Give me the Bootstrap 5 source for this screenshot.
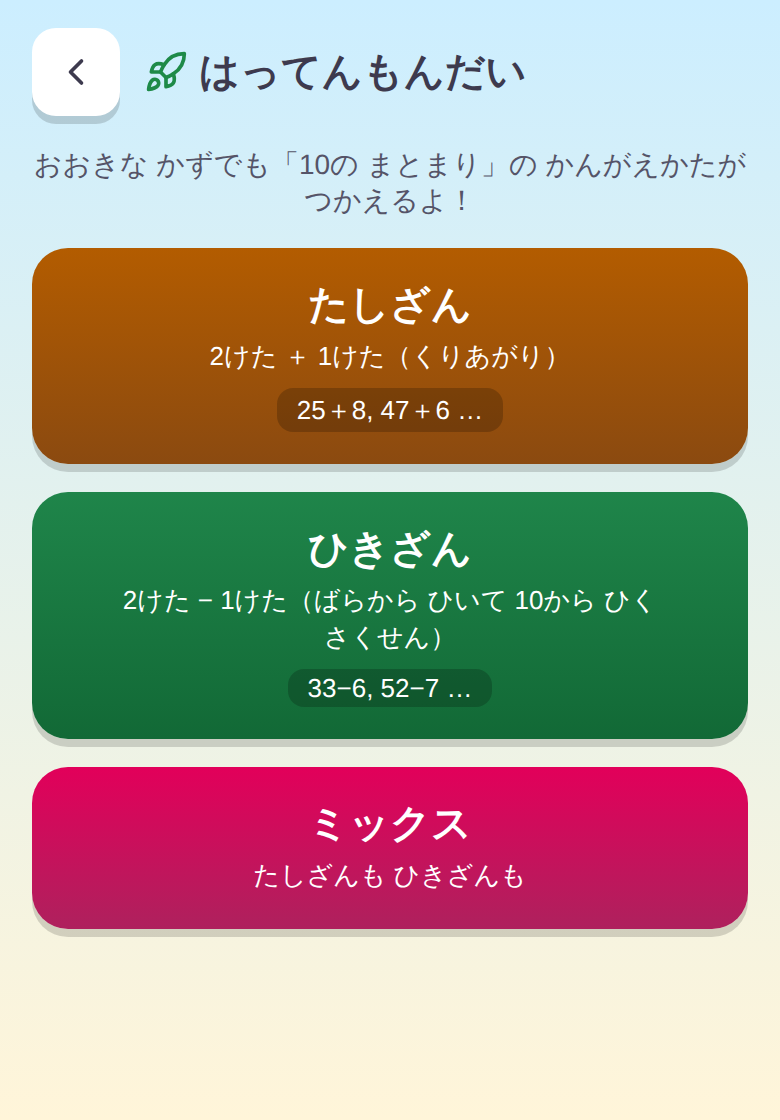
<!DOCTYPE html>
<html lang="ja">
<head>
<meta charset="utf-8">
<meta name="viewport" content="width=device-width, initial-scale=1">
<title>はってんもんだい</title>
<link href="https://cdn.jsdelivr.net/npm/bootstrap@5.3.0/dist/css/bootstrap.min.css" rel="stylesheet">
<script src="https://cdn.jsdelivr.net/npm/bootstrap@5.3.0/dist/js/bootstrap.bundle.min.js" defer></script>
<style>
body, .btn { text-rendering: geometricPrecision; }
body { font-family: "Liberation Sans", sans-serif; color: #3d3a4e; background: linear-gradient(#cceeff, #fff5d9) no-repeat; }
.screen { padding: 28px 32px; }
.screen-head { margin-bottom: 31px; }
.back-btn { width: 88px; height: 88px; border-radius: 24px; --bs-btn-bg: #fff; --bs-btn-color: #3d3a4e; --bs-btn-hover-bg: #f6f6fa; box-shadow: 0 8px 0 rgba(0,0,0,.15); }
.page-title { font-size: 40px; line-height: 58px; gap: 11px; }
.rocket { color: #1e8a48; }
.intro { font-size: 28px; line-height: 36px; margin-bottom: 29px; color: #555468; }
.modes { gap: 28px; }
.mode-btn { --bs-btn-color: #fff; --bs-btn-hover-color: #fff; --bs-btn-active-color: #fff; border-radius: 36px; padding: 32px; box-shadow: 0 8px 0 rgba(0,0,0,.15); word-break: keep-all; }
.mode-name { font-size: 40px; line-height: 50px; margin-bottom: 8px; }
.mode-desc { font-size: 26px; line-height: 37px; margin-bottom: 3px; }
.mode-sample { font-size: 26px; line-height: 30px; padding: 4px 20px; margin-top: 10px; border-radius: 16px; background: rgba(0,0,0,.2); }
.mode-add .mode-sample { line-height: 36px; }
.mode-add { background: linear-gradient(#b35c00, #8b4a10); }
.mode-sub { background: linear-gradient(#1f854a, #126936); }
.mode-mix { background: linear-gradient(#e2005a, #ae215d); }
</style>
</head>
<body class="min-vh-100">
<main class="screen">
  <header class="screen-head d-flex align-items-center gap-4">
    <button type="button" class="btn back-btn border-0 p-0 d-flex align-items-center justify-content-center" aria-label="もどる">
      <svg width="44" height="44" viewBox="0 0 24 24" fill="none" stroke="currentColor" stroke-width="2" stroke-linecap="round" stroke-linejoin="round" aria-hidden="true"><path d="m15 18-6-6 6-6"/></svg>
    </button>
    <h1 class="page-title fw-bold d-flex align-items-center mb-0">
      <svg class="rocket flex-shrink-0" width="44" height="44" viewBox="0 0 24 24" fill="none" stroke="currentColor" stroke-width="2" stroke-linecap="round" stroke-linejoin="round" aria-hidden="true"><path d="M4.5 16.5c-1.5 1.26-2 5-2 5s3.74-.5 5-2c.71-.84.7-2.13-.09-2.91a2.18 2.18 0 0 0-2.91-.09z"/><path d="m12 15-3-3a22 22 0 0 1 2-3.95A12.88 12.88 0 0 1 22 2c0 2.72-.78 7.5-6 11a22.35 22.35 0 0 1-4 2z"/><path d="M9 12H4s.55-3.03 2-4c1.62-1.08 5 0 5 0"/><path d="M12 15v5s3.03-.55 4-2c1.08-1.62 0-5 0-5"/></svg>
      <span>はってんもんだい</span>
    </h1>
  </header>
  <p class="intro text-center">おおきな かずでも「10の まとまり」の かんがえかたが つかえるよ！</p>
  <div class="modes d-grid">
    <button type="button" class="btn mode-btn mode-add border-0 d-flex flex-column align-items-center">
      <span class="mode-name fw-bold">たしざん</span>
      <span class="mode-desc">2けた ＋ 1けた（くりあがり）</span>
      <span class="mode-sample">25＋8, 47＋6 …</span>
    </button>
    <button type="button" class="btn mode-btn mode-sub border-0 d-flex flex-column align-items-center">
      <span class="mode-name fw-bold">ひきざん</span>
      <span class="mode-desc">2けた − 1けた（ばらから ひいて 10から ひく さくせん）</span>
      <span class="mode-sample">33−6, 52−7 …</span>
    </button>
    <button type="button" class="btn mode-btn mode-mix border-0 d-flex flex-column align-items-center">
      <span class="mode-name fw-bold">ミックス</span>
      <span class="mode-desc">たしざんも ひきざんも</span>
    </button>
  </div>
</main>
</body>
</html>
